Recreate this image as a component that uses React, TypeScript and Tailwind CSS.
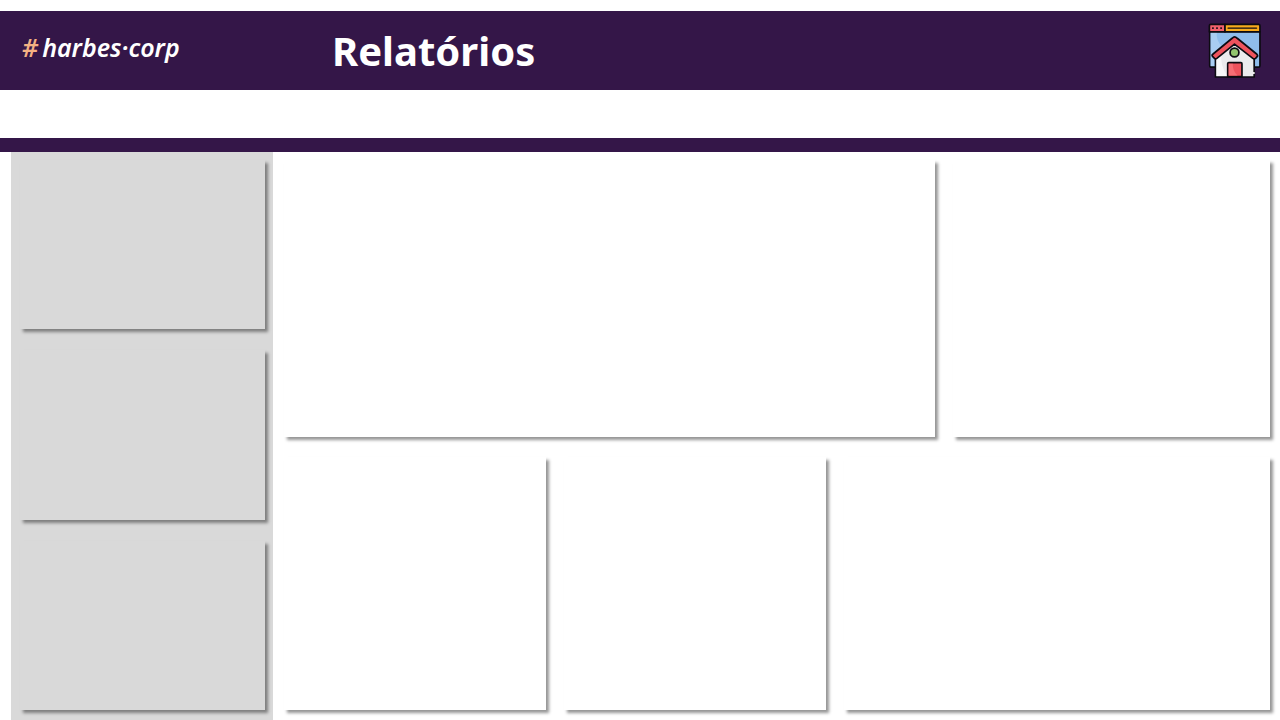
function HomeIcon() {
  return (
    <svg viewBox="41 40 154 162" className="h-[55px] w-[53px]" aria-hidden="true" strokeLinejoin="round" strokeLinecap="round">
      <path d="M45 65H193V166Q193 170 188 170H50Q45 170 45 165Z" fill="#8fbdec" stroke="#0d0b12" strokeWidth="5" />
      <path d="M48 68H66Q62 92 84 112L58 134V167H48Z" fill="#a9cdf2" />
      <path d="M48 44H90V66H44V48Q44 44 48 44Z" fill="#f2616c" stroke="#0d0b12" strokeWidth="5" />
      <path d="M90 44H189Q193 44 193 48V66H90Z" fill="#f9ab1c" stroke="#0d0b12" strokeWidth="5" />
      <path d="M54 55H55M66 55H67M78 55H79" stroke="#0d0b12" strokeWidth="5" />
      <path d="M99 55H183" stroke="#0d0b12" strokeWidth="4" />
      <path d="M62 138L118 93L176 138V199H62Z" fill="#ebebed" stroke="#0d0b12" strokeWidth="5" />
      <path d="M65 139L80 127Q74 168 98 196H65Z" fill="#f8f8f9" />
      <path d="M118 81Q122 81 126 85L184 132Q188 136 184 140L180 144Q176 147 172 144L118 102L66 144Q62 147 59 144L54 139Q50 135 54 132L111 85Q115 81 118 81Z" fill="#ee535d" stroke="#0d0b12" strokeWidth="5" />
      <circle cx="118" cy="127" r="13" fill="#92c56e" stroke="#0d0b12" strokeWidth="5" />
      <path d="M98 198V159Q98 157 101 157H137Q140 157 140 160V198Z" fill="#ee535d" stroke="#0d0b12" strokeWidth="5" />
      <path d="M101 160H113Q112 181 127 195H101Z" fill="#f66e75" />
      <circle cx="175" cy="187" r="3" fill="#fff" />
    </svg>
  );
}

function Panel({ label, className = "" }: { label: string; className?: string }) {
  return <section aria-label={label} className={`shadow-[3px_3px_3px_rgba(0,0,0,0.42)] ${className}`} />;
}

export default function App() {
  return (
    <div className="flex min-h-screen flex-col bg-white pt-[11px] font-['Noto_Sans','Open_Sans',sans-serif]">
      <header className="flex h-[79px] items-center bg-[#341648] pr-[19px] pl-[22px] text-white">
        <a href="#inicio" className="flex w-[310px] shrink-0 gap-1 pb-2 text-[25px] leading-8 font-semibold italic">
          <span className="text-[#f4b183]">#</span>
          <span>harbes·corp</span>
        </a>
        <h1 className="flex-1 text-[40px] leading-[56px] font-bold">Relatórios</h1>
        <a href="#inicio" aria-label="Página inicial">
          <HomeIcon />
        </a>
      </header>
      <div className="mt-12 h-[14px] bg-[#341648]" />
      <div className="flex flex-1 pl-[11px]">
        <aside className="flex w-[262px] shrink-0 flex-col gap-[21px] bg-[#d9d9d9] pt-2 pr-2 pb-[10px] pl-[9px]">
          <Panel label="Filtro 1" className="flex-1 bg-[#d9d9d9]" />
          <Panel label="Filtro 2" className="flex-1 bg-[#d9d9d9]" />
          <Panel label="Filtro 3" className="flex-1 bg-[#d9d9d9]" />
        </aside>
        <main className="grid flex-1 grid-rows-[277fr_253fr] gap-5 pt-2 pr-[10px] pb-[10px] pl-[11px]">
          <div className="grid grid-cols-[651fr_317fr] gap-[18px]">
            <Panel label="Painel 1" className="bg-white" />
            <Panel label="Painel 2" className="bg-white" />
          </div>
          <div className="grid grid-cols-[262fr_262fr_426fr] gap-[18px]">
            <Panel label="Painel 3" className="bg-white" />
            <Panel label="Painel 4" className="bg-white" />
            <Panel label="Painel 5" className="bg-white" />
          </div>
        </main>
      </div>
    </div>
  );
}
